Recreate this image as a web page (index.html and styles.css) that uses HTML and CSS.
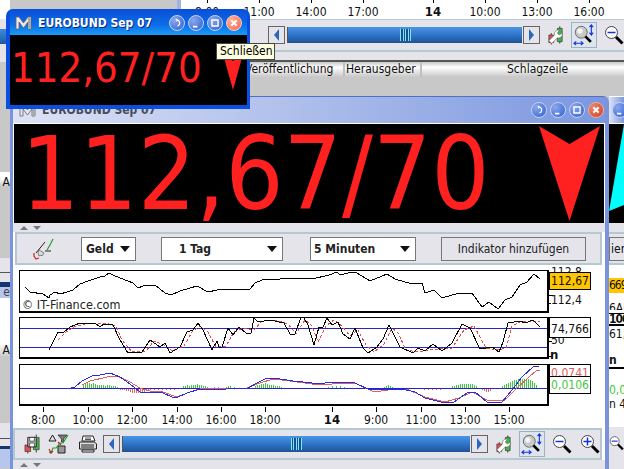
FILE: index.html
```html
<!DOCTYPE html>
<html lang="de">

<head>
    <meta charset="UTF-8">
    <title>EUROBUND Sep 07</title>
    <link rel="stylesheet" href="styles.css">
</head>

<body>
<!-- shared icons -->
<svg class="defs" width="0" height="0">
    <symbol id="i-logo" viewBox="0 0 17 14">
        <path d="M1 13V1h3l4.500 6L13 1h3v12h-3V6l-4.500 6L4 6v7z" fill="#e8e8e8" stroke="#666" stroke-width=".8"/>
        <path d="M13 1h3v12h-3z" fill="#a8a8a8"/>
    </symbol>
    <symbol id="i-refresh" viewBox="0 0 16 16">
        <path d="M8 4.500a3.600 3.600 0 0 1 .5 7M6.500 3.500l2 1-1.500 1.500" fill="none" stroke="#fff" stroke-width="1.300"/>
    </symbol>
    <symbol id="i-min" viewBox="0 0 16 16"><path d="M4.500 11h5v2h-5z" fill="#fff"/></symbol>
    <symbol id="i-max" viewBox="0 0 16 16"><path d="M4.500 4.500h7v7h-7z" fill="none" stroke="#fff" stroke-width="1.600"/></symbol>
    <symbol id="i-close" viewBox="0 0 16 16"><path d="M5 5l6 6M11 5l-6 6" stroke="#fff" stroke-width="2.400"/></symbol>
    <symbol id="i-wrench" viewBox="0 0 20 20">
        <path d="M12 3h5v14h-5z" fill="#3fb54a" stroke="#333" stroke-width=".7"/>
        <path d="M3 10h5v8H3z" fill="#e05050" stroke="#333" stroke-width=".7"/>
        <path d="M14.500 1v2M14.500 17v2M5.500 8v2M5.500 18v2" stroke="#333"/>
        <path d="M3 16l6-6c-1-3 2-6 5-5l-2 3 2 2 3-2c1 3-2 6-5 5l-6 6z" fill="#fff" stroke="#555" stroke-width=".6"/>
    </symbol>
    <symbol id="i-fit" viewBox="0 0 24 24">
        <circle cx="9" cy="9" r="6.500" fill="#c9c9c9" stroke="#666"/>
        <circle cx="7.500" cy="7.500" r="3" fill="#f4f4f4"/>
        <path d="M13.500 13.500l6 6" stroke="#000" stroke-width="3"/>
        <path d="M20 1v11M18 3.500l2-2.500 2 2.500M18 9.500l2 2.500 2-2.500M1 21h10M3.500 19l-2.500 2 2.500 2M8.500 19l2.500 2-2.500 2" fill="none" stroke="#1030e0" stroke-width="1.200"/>
    </symbol>
    <symbol id="i-minus" viewBox="0 0 20 20">
        <circle cx="7.500" cy="7.500" r="6" fill="#fff" stroke="#444"/>
        <path d="M12 12l6.500 6.500" stroke="#000" stroke-width="3"/>
        <path d="M3.500 7.500h8" stroke="#1030e0" stroke-width="1.500"/>
    </symbol>
    <symbol id="i-plus" viewBox="0 0 20 20">
        <circle cx="7.500" cy="7.500" r="6" fill="#fff" stroke="#444"/>
        <path d="M12 12l6.500 6.500" stroke="#000" stroke-width="3"/>
        <path d="M3.500 7.500h8M7.500 3.500v8" stroke="#1030e0" stroke-width="1.500"/>
    </symbol>
    <symbol id="i-print" viewBox="0 0 20 18">
        <path d="M5 1h10l2 5H4z" fill="#fff" stroke="#222"/>
        <path d="M1.500 7h15l2 2v5h-17z" fill="#ddd" stroke="#222"/>
        <path d="M3 10h13M3 12h13M4 15h12v2H4z" fill="#fff" stroke="#222"/>
        <path d="M7 3h6M7 4.500h6" stroke="#555"/>
    </symbol>
    <symbol id="i-save" viewBox="0 0 18 20">
        <path d="M10 3h6v13h-6z" fill="#3fb54a" stroke="#333" stroke-width=".7"/>
        <path d="M1 11h6v7H1z" fill="#e05050" stroke="#333" stroke-width=".7"/>
        <path d="M13 0v3M13 16v3M4 18v2" stroke="#333"/>
        <path d="M4 3h8l1 1v9H4z" fill="#bbb" stroke="#222"/>
        <path d="M6 3h5v4H6zM6 9h5v4H6z" fill="#fff" stroke="#222" stroke-width=".7"/>
    </symbol>
    <symbol id="i-list" viewBox="0 0 22 20">
        <path d="M4.500 1l3.500 6H1z" fill="#ddd" stroke="#222"/>
        <path d="M10 1h9l-3.500 4v3h-2V5z" fill="#777" stroke="#222" stroke-width=".7"/>
        <path d="M10 12h7v7h-7z" fill="#999" stroke="#222"/>
        <path d="M1 18l2 1 2-5h3l4-5 3 0 5-8" fill="none" stroke="#1aa52a" stroke-width="1.200"/>
        <path d="M1 15l2 4 2-2M10 8l3 3" fill="none" stroke="#d02020" stroke-width="1.200"/>
    </symbol>
    <symbol id="i-pencil" viewBox="0 0 22 22">
        <path d="M14 12l3-5 3-6" fill="none" stroke="#1aa52a" stroke-width="1.200"/>
        <path d="M1 15v3l2 3 3-1" fill="none" stroke="#d02020" stroke-width="1.200"/>
        <path d="M3 15l9-11M12 13h6" stroke="#222" fill="none"/>
        <path d="M6 12l5 3-2 3-1-1-2 1-1-3z" fill="#ddd" stroke="#555" stroke-width=".7"/>
    </symbol>
</svg>

<div class="desktop">

    <!-- column of windows far left -->
    <div class="left-col">
        <div class="lc-white lc-19"></div>
        <div class="lc-light lc-10"></div>
        <div class="lc-track lc-15"></div>
        <div class="lc-light lc-16"></div>
        <div class="lc-grey lc-110"></div>
        <div class="lc-white lc-6"></div>
        <div class="lc-head lc-9">A</div>
        <div class="lc-grey lc-71"></div>
        <div class="lc-light lc-14"></div>
        <div class="lc-dark lc-1"></div>
        <div class="lc-light lc-9b"></div>
        <div class="lc-navy lc-5"></div>
        <div class="lc-blue lc-11">e</div>
        <div class="lc-white lc-45"></div>
        <div class="lc-head lc-15b">A</div>
        <div class="lc-grey lc-65"></div>
        <div class="lc-light lc-15b"></div>
        <div class="lc-dark lc-1"></div>
        <div class="lc-light lc-8"></div>
        <div class="lc-navy lc-3"></div>
        <div class="lc-blue lc-19"></div>
    </div>
    <div class="back-divider"></div>

    <!-- news window behind -->
    <div class="back-win">
        <svg class="back-axis" width="443" height="19" viewBox="181 0 443 19">
            <path class="tick" d="M207 0v3M259 0v3M311 0v3M363 0v3M433 0v3M485 0v3M537 0v3M589 0v3"/>
            <text class="axis-text" x="207" y="16">8:00</text>
            <text class="axis-text" x="259" y="16">11:00</text>
            <text class="axis-text" x="311" y="16">14:00</text>
            <text class="axis-text" x="363" y="16">17:00</text>
            <text class="axis-text axis-bold" x="433" y="16">14</text>
            <text class="axis-text" x="485" y="16">10:00</text>
            <text class="axis-text" x="537" y="16">13:00</text>
            <text class="axis-text" x="589" y="16">16:00</text>
        </svg>
        <div class="toolbar back-toolbar">
            <div class="scroll back-scroll">
                <span class="scroll-btn"><i class="arrow-left"></i></span>
                <span class="scroll-track"><i class="grip"></i></span>
                <span class="scroll-btn"><i class="arrow-right"></i></span>
            </div>
            <svg class="icon-wrench" width="19" height="20"><use href="#i-wrench"/></svg>
            <span class="fit-btn"><svg width="22" height="22"><use href="#i-fit"/></svg></span>
            <svg class="icon-zoom" width="20" height="20"><use href="#i-minus"/></svg>
        </div>
        <div class="back-gap"></div>
        <div class="news-head">
            <span class="col col-date">Veröffentlichung</span>
            <span class="col col-pub">Herausgeber</span>
            <span class="col col-line">Schlagzeile</span>
        </div>
    </div>

    <!-- other instrument, nearly hidden on the right -->
    <div class="side-win">
        <div class="title title-off side-title">
            <span class="tbtn"><svg width="16" height="16"><use href="#i-min"/></svg></span>
            <span class="tbtn"><svg width="16" height="16"><use href="#i-max"/></svg></span>
        </div>
        <svg class="side-display" width="15" height="99" viewBox="609 124 15 99">
            <path d="M624 124L609 211l15-6z" fill="#00ffff"/>
        </svg>
        <div class="splitter"></div>
        <div class="toolbar side-panel"><span class="side-btn">ien</span></div>
        <div class="side-values">
            <div class="sv sv-orange">669</div>
            <div class="sv sv-faint">6A6</div>
            <div class="sv sv-bold">100</div>
            <div class="sv sv-plain">61,7</div>
            <div class="sv sv-n">n</div>
            <div class="sv sv-green">0,00</div>
            <div class="sv sv-last">n 4</div>
        </div>
        <div class="toolbar side-bottom"><svg width="20" height="20"><use href="#i-minus"/></svg></div>
    </div>

    <!-- main quote window -->
    <div class="main-win">
        <div class="title title-off">
            <svg class="logo" width="17" height="14"><use href="#i-logo"/></svg>
            <span class="title-text">EUROBUND Sep 07</span>
            <span class="tbtn tbtn-first"><svg width="16" height="16"><use href="#i-refresh"/></svg></span>
            <span class="tbtn"><svg width="16" height="16"><use href="#i-min"/></svg></span>
            <span class="tbtn"><svg width="16" height="16"><use href="#i-max"/></svg></span>
            <span class="tbtn tbtn-close"><svg width="16" height="16"><use href="#i-close"/></svg></span>
        </div>
        <div class="display">
            <span class="price">112,67/70</span>
            <svg class="down" width="61" height="97" viewBox="0 0 61 97">
                <path d="M0 1l30.500 18L61 1 30.500 96z"/>
            </svg>
        </div>
        <div class="splitter"><i class="up"></i><i class="dn"></i></div>

        <div class="toolbar top-tools">
            <svg class="pencil" width="22" height="22"><use href="#i-pencil"/></svg>
            <div class="select sel-geld">Geld<i></i></div>
            <div class="select sel-tag"><span>1 Tag</span><i></i></div>
            <div class="select sel-min"><span>5 Minuten</span><i></i></div>
            <div class="add-btn">Indikator hinzufügen</div>
        </div>

        <div class="charts">
            <div class="chart chart-price">
                <svg width="536" height="43" viewBox="19 270 536 43">
                    <polyline class="line" points="25,287 30,292 43,294 49,298 50,295 55,292 60,294 67,292 73,290 80,284 88,281 100,277 105,276 109,273 115,276 128,281 133,283 138,288 143,286 155,285 165,293 171,295 180,291 197,286 208,292 217,290 230,289 250,289 255,283 262,280 280,279 293,278 312,279 329,275 337,272 340,275 352,272 357,273 370,281 387,274 395,279 412,284 422,283 425,293 434,290 442,298 459,293 472,293 482,307 489,302 498,309 505,300 512,297 520,285 527,282 534,274 540,279"/>
                    <path class="frame" d="M19.500 311V270.500H547"/>
                    <path class="frame-thick" d="M19 311.500H548V270"/>
                    <path class="tick" d="M548 279h5M548 287h3M548 295h5M548 303h3"/>
                </svg>
                <span class="copy">© IT-Finance.com</span>
                <span class="tag tag-gold">112,67</span>
                <span class="scale-a">112,8</span>
                <span class="scale-b">112,4</span>
            </div>

            <div class="chart chart-stoch">
                <svg width="536" height="42" viewBox="19 317 536 42">
                    <path class="ref" d="M19 328.500H548M19 347.500H548"/>
                    <polyline class="line-dash" points="58,340 66,332 76,326 90,323 105,323 116,326 122,340 132,352 146,351 154,341 164,345 172,351 184,346 192,332 200,326 208,332 216,347 226,346 234,332 244,328 254,330 262,321 276,320 288,324 296,334 305,320 312,326 318,342 326,326 334,320 342,326 350,336 358,330 366,345 374,352 384,344 392,328 398,333 406,350 418,352 430,350 440,349 452,348 464,330 474,326 486,348 498,350 506,348 512,326 522,321 540,322"/>
                    <polyline class="line" points="49,350 58,332 63,333 70,327 80,323 95,323 100,327 104,324 113,325 120,340 128,353 142,352 150,340 160,347 165,343 170,353 180,347 187,332 193,330 198,323 203,330 212,350 217,341 219,347 222,347 228,328 233,335 239,327 247,334 251,333 254,318 258,322 270,320 284,323 290,334 295,334 301,317 304,318 308,325 314,345 319,327 323,327 327,318 332,325 338,322 343,334 350,339 355,328 363,348 368,353 377,347 383,339 389,325 400,347 413,353 418,348 425,351 433,344 442,351 452,343 462,324 470,328 480,349 492,347 499,352 503,342 508,323 520,321 525,323 533,320 540,327"/>
                    <path class="frame" d="M19.500 358V317.500H547"/>
                    <path class="frame-thick" d="M19 357.500H548V317"/>
                    <path class="tick" d="M548 341h4M548 356h4"/>
                </svg>
                <span class="tag tag-white">74,766</span>
                <span class="scale-c">50</span>
                <span class="scale-d">n</span>
            </div>

            <div class="chart chart-macd">
                <svg width="536" height="42" viewBox="19 364 536 42">
                    <path class="hist-green" d="M83 388v-4M85 388v-5M87 388v-6M89 388v-5M91 388v-4M93 388v-5M95 388v-4M97 388v-3M99 388v-3M101 388v-3M103 388v-3M105 388v-2M107 388v-3M109 388v-3M111 388v-2M113 388v-2M115 388v-2M117 388v-1M183 388v-2M185 388v-2M187 388v-3M189 388v-2M191 388v-3M193 388v-3M195 388v-3M197 388v-4M199 388v-3M201 388v-3M203 388v-2M205 388v-2M207 388v-1M214 388v-1M218 388v-1M226 388v-1M228 388v-2M230 388v-2M234 388v-1M255 388v-2M257 388v-3M259 388v-3M261 388v-4M263 388v-4M265 388v-5M267 388v-4M269 388v-3M271 388v-3M273 388v-3M275 388v-2M277 388v-2M279 388v-2M281 388v-1M328 388v-1M332 388v-2M336 388v-2M340 388v-2M344 388v-1M384 388v-1M386 388v-2M388 388v-3M390 388v-2M392 388v-1M452 388v-2M454 388v-2M456 388v-3M458 388v-3M460 388v-4M462 388v-4M464 388v-4M466 388v-4M468 388v-4M470 388v-4M472 388v-4M474 388v-3M476 388v-2M502 388v-2M504 388v-3M506 388v-4M508 388v-5M510 388v-6M512 388v-7M514 388v-8M516 388v-8M518 388v-9M520 388v-9M522 388v-9M524 388v-9M526 388v-9M528 388v-9M530 388v-8M532 388v-7M534 388v-5M536 388v-3"/>
                    <path class="hist-red" d="M118 388v1M120 388v2M122 388v2M124 388v2M126 388v3M128 388v3M130 388v4M132 388v5M134 388v5M136 388v5M138 388v5M140 388v5M142 388v5M144 388v4M146 388v3M148 388v3M150 388v2M154 388v2M158 388v2M162 388v2M166 388v2M170 388v2M174 388v2M178 388v1M182 388v1M286 388v1M290 388v1M294 388v1M298 388v1M302 388v1M306 388v1M310 388v1M314 388v1M318 388v1M322 388v1M420 388v1M424 388v2M428 388v2M432 388v2M436 388v2M440 388v2M444 388v1M448 388v1M482 388v2M484 388v3M486 388v4M488 388v4M490 388v3M494 388v1M498 388v1"/>
                    <path class="ref" d="M19 388.500H548"/>
                    <polyline class="macd-red" points="82,385 90,381 107,377 117,376 130,382 140,388 150,391 163,392 177,397 190,392 203,388 227,389 247,388 260,383 273,379 290,381 312,384 332,384 355,383 374,392 395,389 409,390 425,397 445,402 459,398 472,392 489,401 505,400 515,390 529,377 536,371 540,370"/>
                    <polyline class="macd-blue" points="67,389 75,387 82,381 92,376 100,375 110,373 120,377 130,384 140,392 143,393 150,392 163,393 172,397 178,397 187,393 200,389 220,390 233,388 248,388 257,383 267,378 280,379 293,381 312,383 325,383 335,382 355,383 370,390 382,389 402,389 415,392 425,398 445,403 454,402 467,393 475,392 487,402 502,402 512,390 522,377 534,366 539,367"/>
                    <path class="frame" d="M19.500 405V364.500H547"/>
                    <path class="frame-thick" d="M19 405H548V364"/>
                </svg>
                <span class="tag-pair">
                    <span class="tag-red">0,0741</span>
                    <span class="tag-green">0,0106</span>
                </span>
            </div>

            <svg class="time-axis" width="530" height="21" viewBox="19 406 530 21">
                <path class="tick" d="M43 407v5M88 407v5M132 407v5M177 407v5M221 407v5M265 407v5M332 407v5M376 407v5M421 407v5M465 407v5M509 407v5"/>
                <text class="axis-text" x="43" y="424">8:00</text>
                <text class="axis-text" x="88" y="424">10:00</text>
                <text class="axis-text" x="132" y="424">12:00</text>
                <text class="axis-text" x="177" y="424">14:00</text>
                <text class="axis-text" x="221" y="424">16:00</text>
                <text class="axis-text" x="265" y="424">18:00</text>
                <text class="axis-text axis-bold" x="332" y="424">14</text>
                <text class="axis-text" x="376" y="424">9:00</text>
                <text class="axis-text" x="421" y="424">11:00</text>
                <text class="axis-text" x="465" y="424">13:00</text>
                <text class="axis-text" x="509" y="424">15:00</text>
            </svg>
        </div>

        <div class="toolbar bottom-tools">
            <svg class="t-save" width="17" height="20"><use href="#i-save"/></svg>
            <svg class="t-list" width="22" height="20"><use href="#i-list"/></svg>
            <svg class="t-print" width="20" height="18"><use href="#i-print"/></svg>
            <div class="scroll main-scroll">
                <span class="scroll-btn"><i class="arrow-left"></i></span>
                <span class="scroll-track"><i class="grip"></i></span>
                <span class="scroll-btn"><i class="arrow-right"></i></span>
            </div>
            <svg class="icon-wrench" width="19" height="20"><use href="#i-wrench"/></svg>
            <span class="fit-btn"><svg width="22" height="22"><use href="#i-fit"/></svg></span>
            <svg class="icon-zoom" width="20" height="20"><use href="#i-minus"/></svg>
            <svg class="icon-zoom icon-plus" width="20" height="20"><use href="#i-plus"/></svg>
        </div>
        <div class="splitter"><i class="up"></i><i class="dn"></i></div>
    </div>

    <!-- floating always on top quote -->
    <div class="float-win">
        <div class="title title-on">
            <svg class="logo" width="17" height="14"><use href="#i-logo"/></svg>
            <span class="title-text">EUROBUND Sep 07</span>
            <span class="tbtn tbtn-first"><svg width="16" height="16"><use href="#i-refresh"/></svg></span>
            <span class="tbtn"><svg width="16" height="16"><use href="#i-min"/></svg></span>
            <span class="tbtn"><svg width="16" height="16"><use href="#i-max"/></svg></span>
            <span class="tbtn tbtn-hover"><svg width="16" height="16"><use href="#i-close"/></svg></span>
        </div>
        <div class="float-body">
            <span class="float-price">112,67/70</span>
            <svg class="float-down" width="20" height="38" viewBox="0 0 20 38">
                <path d="M0 1l10 7L20 1 10 37z"/>
            </svg>
        </div>
    </div>

    <div class="tooltip">Schließen</div>
</div>
</body>

</html>
```

FILE: styles.css
```css
body {
    margin: 0;
    font-family: "DejaVu Sans Condensed", "DejaVu Sans", sans-serif;
    font-size: 12px;
    color: #111;
}

.defs {
    position: absolute;
}

.desktop {
    position: relative;
    width: 624px;
    height: 469px;
    overflow: hidden;
    background: #c8c8c8;
}

/* left column */
.left-col {
    position: absolute;
    left: 0;
    top: 0;
    width: 10px;
    height: 469px;
    font-size: 12px;
    overflow: hidden;
    text-align: right;
}

.lc-white { background: #ffffff; }
.lc-light { background: #e4e4ea; }
.lc-grey { background: #c8c8c8; }
.lc-dark { background: #555555; }
.lc-navy { background: #14366e; }
.lc-track { background: linear-gradient(#3c8ce0, #1e5aa0); }
.lc-blue { background: #b7c6ec; color: #444; line-height: 11px; }
.lc-head { background: linear-gradient(#ffffff, #c4c4c4); line-height: 15px; }

.lc-1 { height: 1px; }
.lc-3 { height: 3px; }
.lc-5 { height: 5px; }
.lc-6 { height: 6px; }
.lc-8 { height: 7px; }
.lc-9 { height: 9px; line-height: 9px; }
.lc-9b { height: 9px; }
.lc-10 { height: 10px; }
.lc-11 { height: 11px; }
.lc-14 { height: 14px; }
.lc-15 { height: 15px; }
.lc-15b { height: 15px; }
.lc-16 { height: 18px; }
.lc-19 { height: 19px; }
.lc-45 { height: 45px; }
.lc-65 { height: 65px; }
.lc-71 { height: 71px; }
.lc-110 { height: 110px; }

.back-divider {
    position: absolute;
    left: 177px;
    top: 0;
    width: 4px;
    height: 96px;
    background: #a4b4e0;
}

/* window at the back */
.back-win {
    position: absolute;
    left: 181px;
    top: 0;
    width: 443px;
    height: 96px;
    display: flex;
    flex-direction: column;
    background: #c8c8c8;
}

.back-axis {
    display: block;
    background: #ffffff;
}

.tick {
    stroke: #000;
    fill: none;
    shape-rendering: crispEdges;
}

.axis-text {
    font-size: 12px;
    text-anchor: middle;
    fill: #111;
}

.axis-bold {
    font-weight: bold;
    font-size: 13px;
}

.toolbar {
    display: flex;
    align-items: center;
    box-sizing: border-box;
    background: #e4e4ea;
    border: 2px solid #b4c8d0;
}

.back-toolbar {
    height: 33px;
    padding-left: 87px;
    border-width: 1px 0 2px;
    flex: none;
}

.back-gap {
    height: 8px;
    background: #e4e4ea;
    border-bottom: 2px solid #555;
    flex: none;
}

.scroll {
    display: flex;
    align-items: center;
    height: 18px;
}

.back-scroll {
    width: 274px;
}

.main-scroll {
    width: 387px;
    margin-left: 5px;
}

.scroll-btn {
    flex: none;
    display: flex;
    align-items: center;
    justify-content: center;
    box-sizing: border-box;
    width: 17px;
    height: 18px;
    background: #e4e4ea;
    border: 1px solid #666;
}

.arrow-left {
    border: 6px solid transparent;
    border-left-width: 0;
    border-right: 5px solid #2a66c0;
}

.arrow-right {
    border: 6px solid transparent;
    border-right-width: 0;
    border-left: 5px solid #2a66c0;
}

.scroll-track {
    flex: 1;
    height: 16px;
    margin: 0 1px 0 2px;
    display: flex;
    align-items: center;
    justify-content: center;
    background: linear-gradient(#4a96e6, #2f74c8 50%, #1f5296);
    border-left: 1px solid #555;
}

.grip {
    width: 11px;
    height: 12px;
    background: repeating-linear-gradient(90deg, #7fe8f8 0 1px, #1b4e90 1px 2.5px);
}

.icon-wrench {
    flex: none;
    margin-left: 6px;
}

.fit-btn {
    flex: none;
    display: flex;
    align-items: center;
    justify-content: center;
    box-sizing: border-box;
    width: 26px;
    height: 26px;
    margin-left: 6px;
    background: #dfe5ec;
    border: 1px solid #9db2c0;
}

.icon-zoom {
    flex: none;
    margin-left: 7px;
}

.icon-plus {
    margin-left: 8px;
}

.news-head {
    position: relative;
    height: 15px;
    flex: none;
    background: linear-gradient(#c8c8c8, #ffffff 35%, #c8c8c8);
    line-height: 15px;
    font-size: 12px;
}

.col {
    position: absolute;
    top: 0;
    white-space: nowrap;
}

.col-date {
    left: 64px;
}

.col-pub {
    left: 162px;
    padding: 0 4px 0 1px;
    border: solid #c0c0c0;
    border-width: 0 2px;
}

.col-line {
    left: 326px;
}

/* shared window title */
.title {
    display: flex;
    align-items: center;
    box-sizing: border-box;
    height: 26px;
    flex: none;
}

.title-on {
    height: 25px;
    background: linear-gradient(#0a50d8, #0c6ee8 60%, #1a9cf4);
    color: #fff;
    padding: 0 5px 0 5px;
}

.title-off {
    background: linear-gradient(90deg, #dde3f6, #7c97df);
    color: #4c4c58;
    padding: 0 1px 0 6px;
}

.logo {
    flex: none;
    margin-right: 6px;
}

.title-text {
    font-weight: bold;
    font-size: 12px;
    white-space: nowrap;
}

.title-on .title-text {
    text-shadow: 1px 1px 0 #0a2a80;
}

.tbtn {
    flex: none;
    box-sizing: border-box;
    width: 16px;
    height: 16px;
    margin-left: 3px;
    border-radius: 50%;
    border: 1px solid #c4d2f4;
    background: radial-gradient(circle at 30% 30%, #8aa8ec, #2e5ed0);
    overflow: hidden;
    display: flex;
    align-items: center;
    justify-content: center;
}

.tbtn-first {
    margin-left: auto;
}

.tbtn-close {
    background: radial-gradient(circle at 30% 30%, #e88a70, #d83c20);
    border-color: #e8b0a0;
}

.tbtn-hover {
    background: radial-gradient(circle at 30% 30%, #ffb098, #f06a50);
    border-color: #ffd0c0;
}

/* main window */
.main-win {
    position: absolute;
    left: 10px;
    top: 96px;
    box-sizing: border-box;
    width: 599px;
    height: 373px;
    display: flex;
    flex-direction: column;
    background: #ffffff;
    border: solid #7b93da;
    border-width: 1px 4px 0 3px;
    border-top-color: #4f6fc8;
    border-radius: 6px 6px 0 0;
}

.display {
    flex: none;
    display: flex;
    align-items: center;
    box-sizing: border-box;
    height: 99px;
    margin: 1px 1px 0;
    padding: 0 4px 0 7px;
    background: #000;
    overflow: hidden;
}

.price {
    font-size: 102px;
    line-height: 92px;
    height: 92px;
    color: #ff2020;
    white-space: nowrap;
}

.down {
    flex: none;
    display: block;
    margin-left: auto;
    fill: #ff2020;
}

.splitter {
    flex: none;
    display: flex;
    align-items: center;
    gap: 5px;
    height: 9px;
    padding-left: 7px;
    background: #e4e4ea;
}

.up {
    border: 4px solid transparent;
    border-top-width: 0;
    border-bottom: 4px solid #777;
}

.dn {
    border: 4px solid transparent;
    border-bottom-width: 0;
    border-top: 4px solid #777;
}

.top-tools {
    flex: none;
    height: 33px;
    margin: 0 3px 0 2px;
    padding-left: 16px;
}

.pencil {
    flex: none;
}

.select {
    flex: none;
    position: relative;
    display: flex;
    align-items: center;
    box-sizing: border-box;
    height: 24px;
    background: #fff;
    border: 1px solid #777;
    font-weight: bold;
    font-size: 12px;
    color: #222;
}

.select i {
    position: absolute;
    right: 5px;
    top: 8px;
    border: 5px solid transparent;
    border-top: 6px solid #111;
    border-bottom-width: 0;
}

.sel-geld {
    width: 55px;
    margin-left: 26px;
    padding-left: 4px;
}

.sel-tag {
    width: 122px;
    margin-left: 25px;
    padding-left: 17px;
}

.sel-min {
    width: 106px;
    margin-left: 27px;
    padding-left: 3px;
}

.add-btn {
    flex: none;
    box-sizing: border-box;
    width: 145px;
    height: 24px;
    margin-left: 25px;
    line-height: 22px;
    text-align: center;
    color: #222;
    background: #e4e4ea;
    border: 1px solid #777;
}

.charts {
    flex: 1;
    display: flex;
    flex-direction: column;
    padding: 5px 0 0 6px;
    background: #fff;
}

.chart {
    position: relative;
    flex: none;
    height: 43px;
    width: 586px;
}

.chart svg {
    display: block;
}

.chart-stoch {
    height: 42px;
    margin-top: 4px;
}

.chart-macd {
    height: 42px;
    margin-top: 5px;
}

.time-axis {
    display: block;
    flex: none;
}

.line {
    fill: none;
    stroke: #000;
    shape-rendering: crispEdges;
}

.line-dash {
    fill: none;
    stroke: #e84848;
    stroke-dasharray: 3 2;
    shape-rendering: crispEdges;
}

.ref {
    fill: none;
    stroke: #2424c8;
    shape-rendering: crispEdges;
}

.frame {
    fill: none;
    stroke: #000;
    shape-rendering: crispEdges;
}

.frame-thick {
    fill: none;
    stroke: #000;
    stroke-width: 2;
    shape-rendering: crispEdges;
}

.macd-blue {
    fill: none;
    stroke: #2a2ae0;
    shape-rendering: crispEdges;
}

.macd-red {
    fill: none;
    stroke: #e06060;
    shape-rendering: crispEdges;
}

.hist-green {
    stroke: #44c844;
    shape-rendering: crispEdges;
}

.hist-red {
    stroke: #e86060;
    shape-rendering: crispEdges;
}

.copy {
    position: absolute;
    left: 3px;
    bottom: 1px;
    font-size: 12.5px;
    line-height: 14px;
    color: #222;
}

.tag {
    position: absolute;
    left: 530px;
    box-sizing: border-box;
    width: 42px;
    text-align: center;
    border: 1px solid #000;
}

.tag-gold {
    top: 2px;
    height: 18px;
    line-height: 16px;
    background: #ffc600;
}

.tag-white {
    top: 0;
    height: 21px;
    line-height: 23px;
    background: #fff;
}

.scale-a {
    position: absolute;
    left: 532px;
    top: -4px;
    height: 6px;
    line-height: 12px;
    overflow: hidden;
}

.scale-b {
    position: absolute;
    left: 532px;
    top: 23px;
}

.scale-c {
    position: absolute;
    left: 532px;
    top: 21px;
    height: 8px;
    line-height: 5px;
    overflow: hidden;
}

.scale-d {
    position: absolute;
    left: 531px;
    top: 31px;
    font-weight: bold;
    font-size: 13px;
    line-height: 14px;
}

.tag-pair {
    position: absolute;
    left: 530px;
    top: 0;
    box-sizing: border-box;
    width: 42px;
    height: 30px;
    display: flex;
    flex-direction: column;
    background: #fff;
    border: 1px solid #000;
    text-align: center;
}

.tag-red {
    height: 12px;
    line-height: 16px;
    overflow: hidden;
    color: #d86060;
    border-bottom: 1px solid #000;
}

.tag-green {
    flex: 1;
    line-height: 16px;
    color: #44c844;
}

.bottom-tools {
    flex: none;
    height: 32px;
    margin: 0 3px 0 0;
    padding-left: 9px;
}

.t-save {
    flex: none;
}

.t-list {
    flex: none;
    margin-left: 7px;
}

.t-print {
    flex: none;
    margin-left: 8px;
}

/* window behind main, on the right */
.side-win {
    position: absolute;
    left: 609px;
    top: 96px;
    width: 15px;
    height: 373px;
    display: flex;
    flex-direction: column;
    overflow: hidden;
    background: #fff;
}

.side-title {
    padding: 0;
    margin-top: 1px;
}

.side-display {
    display: block;
    flex: none;
    margin-top: 1px;
    background: #000;
}

.side-panel {
    flex: none;
    height: 33px;
    padding: 0;
    border-width: 2px 0;
}

.side-btn {
    box-sizing: border-box;
    width: 30px;
    height: 24px;
    line-height: 22px;
    border: 1px solid #777;
    border-right: none;
    padding-left: 1px;
}

.side-values {
    flex: 1;
    display: flex;
    flex-direction: column;
    overflow: hidden;
    white-space: nowrap;
}

.sv {
    line-height: 14px;
    flex: none;
}

.sv-orange {
    margin-top: 13px;
    height: 15px;
    letter-spacing: -1px;
    background: #ffc600;
}

.sv-faint {
    margin-top: 10px;
    height: 7px;
    overflow: hidden;
    line-height: 11px;
}

.sv-bold {
    margin-top: 3px;
    font-weight: bold;
    letter-spacing: -1px;
    border-bottom: 2px solid #000;
    border-top: 1px solid #000;
    height: 10px;
    line-height: 10px;
}

.sv-plain {
    margin-top: 1px;
}

.sv-n {
    margin-top: 12px;
    font-weight: bold;
    border-bottom: 2px solid #000;
}

.sv-green {
    margin-top: 14px;
    color: #44c844;
}

.sv-last {
    margin-top: 0;
}

.side-bottom {
    flex: none;
    height: 42px;
    padding: 0 0 10px;
    border: none;
}

/* floating window */
.float-win {
    position: absolute;
    left: 6px;
    top: 9px;
    box-sizing: border-box;
    width: 244px;
    height: 100px;
    display: flex;
    flex-direction: column;
    background: #0a50e0;
    border: solid #0a50e0;
    border-width: 1px 3px 4px 4px;
    border-radius: 7px 7px 0 0;
    overflow: hidden;
}

.float-body {
    flex: 1;
    display: flex;
    align-items: center;
    padding: 0 4px 0 1px;
    background: #000;
}

.float-price {
    font-size: 41.5px;
    line-height: 42px;
    color: #ff2020;
    white-space: nowrap;
    margin-top: -4px;
}

.float-down {
    flex: none;
    display: block;
    margin: 4px 0 0 auto;
    fill: #ff2020;
}

/* tooltip */
.tooltip {
    position: absolute;
    left: 216px;
    top: 43px;
    box-sizing: border-box;
    width: 59px;
    height: 17px;
    padding-left: 3px;
    line-height: 15px;
    white-space: nowrap;
    background: #ffffe1;
    border: 1px solid #444;
    color: #000;
}
```
